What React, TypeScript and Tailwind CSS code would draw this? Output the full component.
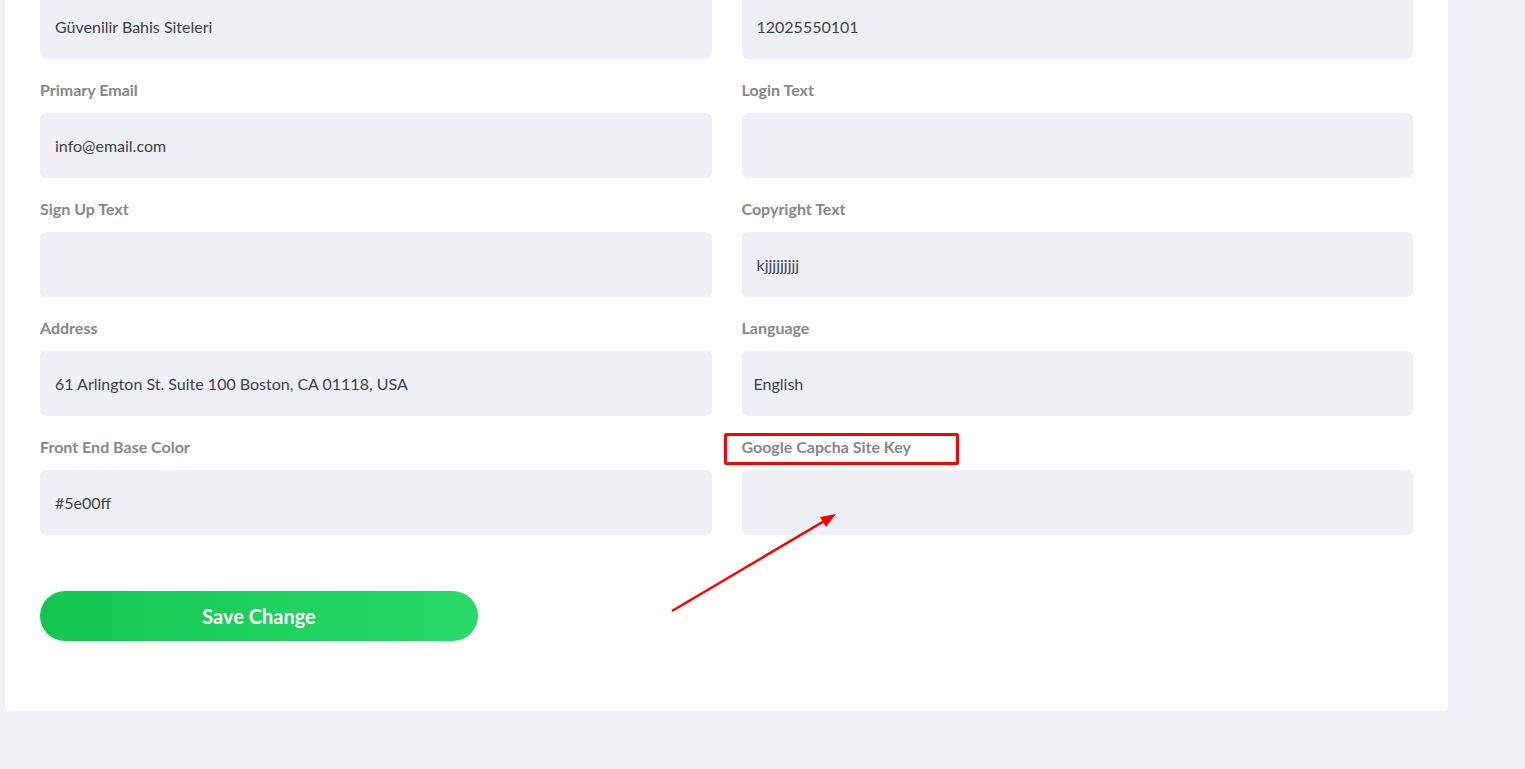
import React from "react";

const font = { fontFamily: "Lato, 'Open Sans', sans-serif" };

function Input({ value, select }: { value?: string; select?: boolean }) {
  return (
    <div
      className={`h-[65px] rounded-[6px] bg-[#eff0f6] flex items-center pt-[1px] ${select ? "pl-[12px]" : "pl-[15px]"} text-[16px] text-[#3f4249]`}
    >
      {value}
    </div>
  );
}

function Field({ label, value, select }: { label: string; value?: string; select?: boolean }) {
  return (
    <div>
      <div className="h-[20px] mt-[21px] mb-[13px] text-[16px] font-bold text-[#87878c] leading-[20px]">{label}</div>
      <Input value={value} select={select} />
    </div>
  );
}

export default function App() {
  return (
    <div className="relative w-[1525px] h-[769px] bg-[#f0f1f7] overflow-hidden" style={font}>
      <div className="ml-[5px] w-[1443px] -mt-[10px] bg-white rounded-b-[4px] pl-[35px] pr-[35px] pt-[4px] pb-[70px]">
        <div className="grid grid-cols-2 gap-x-[30px]">
          <Input value="Güvenilir Bahis Siteleri" />
          <Input value="12025550101" />
          <Field label="Primary Email" value="info@email.com" />
          <Field label="Login Text" />
          <Field label="Sign Up Text" />
          <Field label="Copyright Text" value="kjjjjjjjjj" />
          <Field label="Address" value="61 Arlington St. Suite 100 Boston, CA 01118, USA" />
          <Field label="Language" value="English" select />
          <Field label="Front End Base Color" value="#5e00ff" />
          <Field label="Google Capcha Site Key" />
        </div>
        <button className="mt-[56px] w-[438px] h-[50px] rounded-full bg-gradient-to-r from-[#12c650] to-[#28da6b] text-white text-[20px] font-bold flex items-center justify-center">
          Save Change
        </button>
      </div>
      <div className="absolute left-[724px] top-[433px] w-[235px] h-[32px] border-[3px] border-[#ff0000] rounded-[2px]" />
      <svg className="absolute left-0 top-0" width="1525" height="769" style={{ pointerEvents: "none" }}>
        <line x1="672" y1="611" x2="826" y2="520" stroke="#ff0000" strokeWidth="2.5" />
        <polygon points="836,514 820,517 826,527" fill="#ff0000" />
      </svg>
    </div>
  );
}
